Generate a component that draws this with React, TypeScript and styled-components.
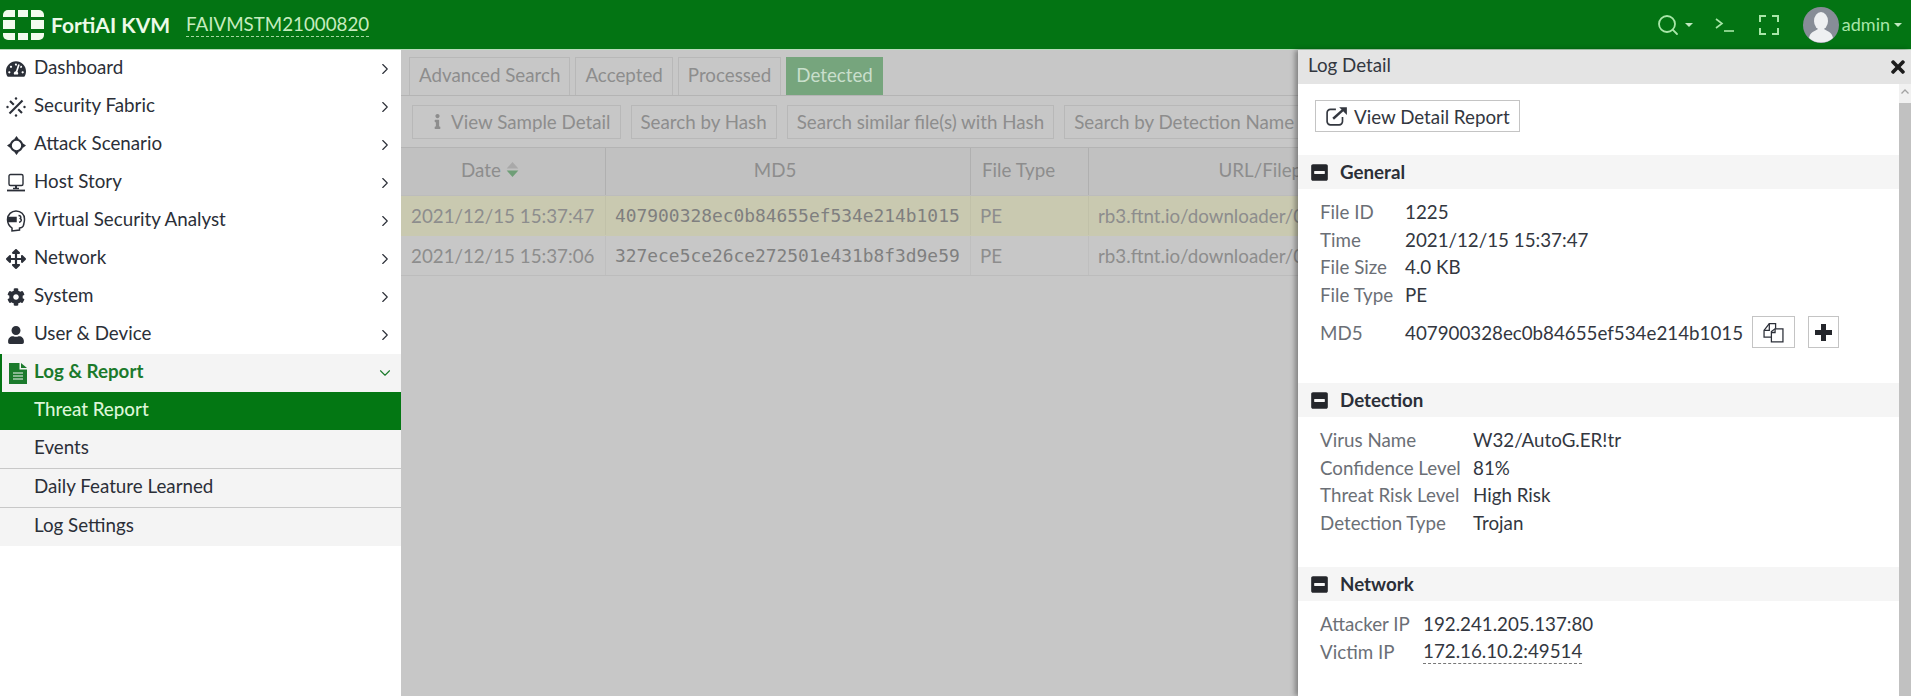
import React from "react";
import styled, { createGlobalStyle } from "styled-components";
import { ChevronDown, ChevronRight, Search } from "lucide-react";
import {
  FaArrowsAlt,
  FaCog,
  FaInfo,
  FaMinusSquare,
  FaTachometerAlt,
  FaTimes,
  FaUser,
} from "react-icons/fa";

const Global = createGlobalStyle`
  html, body {
    margin: 0;
    padding: 0;
    height: 100%;
    overflow: hidden;
    background: #fff;
    font-family: "Lato", "Liberation Sans", sans-serif;
    font-size: 18.75px;
  }
  * { box-sizing: border-box; }
`;

const Page = styled.div`
  width: 1911px;
  height: 696px;
  display: flex;
  flex-direction: column;
  overflow: hidden;
`;

/* top bar */
const TopBar = styled.header`
  height: 50px;
  flex: none;
  display: flex;
  align-items: center;
  background: #037413;
  border-bottom: 1px solid #b9dcbc;
  color: #d9f3d6;
  padding-left: 3px;
`;

const Brand = styled.span`
  font-size: 21px;
  font-weight: 700;
  color: #ecfae8;
  margin-left: 7px;
  width: 135px;
  white-space: nowrap;
`;

const Serial = styled.span`
  font-size: 18.75px;
  line-height: 24px;
  color: #c6ecbf;
  border-bottom: 1px dashed #a3d8a0;
`;

const TopActions = styled.div`
  margin-left: auto;
  display: flex;
  align-items: center;
  color: #a8e6a8;
  padding-right: 9px;
`;

const TopIcon = styled.span<{ $gap: number }>`
  display: inline-flex;
  align-items: center;
  margin-right: ${(p) => p.$gap}px;
`;

const SearchGlyph = styled(Search)`
  margin-right: 1px;
`;

const Caret = styled.span`
  width: 0;
  height: 0;
  margin-left: 4px;
  border-left: 4px solid transparent;
  border-right: 4px solid transparent;
  border-top: 4px solid #c0e8c0;
`;

const AdminName = styled.span`
  font-size: 18px;
  margin-left: 3px;
  padding-bottom: 2px;
  color: #a8e6a8;
`;

const Content = styled.div`
  flex: 1;
  min-height: 0;
  display: flex;
  position: relative;
`;

/* side menu */
const Sidebar = styled.nav`
  width: 401px;
  flex: none;
  background: #fff;
`;

const MenuRow = styled.div<{ $open?: boolean }>`
  height: 38px;
  display: flex;
  align-items: center;
  padding-right: 7px;
  color: ${(p) => (p.$open ? "#1b7a2c" : "#2b2f38")};
  font-weight: ${(p) => (p.$open ? 700 : 400)};
  background: ${(p) => (p.$open ? "#f4f4f4" : "#fff")};
  border-left: ${(p) => (p.$open ? "2px solid #037413" : "0")};
`;

const MenuIcon = styled.span<{ $open?: boolean }>`
  width: ${(p) => (p.$open ? 32 : 34)}px;
  flex: none;
  display: flex;
  justify-content: center;
  padding-left: ${(p) => (p.$open ? 3 : 2)}px;
  padding-right: 4px;
`;

const MenuLabel = styled.span`
  flex: 1;
  white-space: nowrap;
  padding-bottom: 5px;
`;

const SubRow = styled.div<{ $active?: boolean; $line?: boolean }>`
  height: ${(p) => (p.$line ? 39 : 38)}px;
  display: flex;
  align-items: center;
  padding: 0 0 5px 34px;
  background: ${(p) => (p.$active ? "#037713" : "#f4f4f4")};
  color: ${(p) => (p.$active ? "#dcf5d8" : "#2b2f38")};
  font-weight: ${(p) => (p.$active ? 500 : 400)};
  border-bottom: ${(p) => (p.$line ? "1px solid #c8c8c8" : "0")};
`;

/* dimmed main area */
const Main = styled.main`
  flex: 1;
  min-width: 0;
  background: #c7c7c7;
  color: #8d8d8d;
  overflow: hidden;
  padding-top: 7px;
`;

const Tabs = styled.div`
  height: 39px;
  display: flex;
  gap: 5px;
  padding-left: 8px;
  border-bottom: 1px solid #b4b4b4;
`;

const Tab = styled.div<{ $active?: boolean }>`
  height: 38px;
  padding: 0 9px 5px;
  display: flex;
  align-items: center;
  white-space: nowrap;
  border: 1px solid ${(p) => (p.$active ? "#76a57d" : "#b8b8b8")};
  border-bottom: 0;
  background: ${(p) => (p.$active ? "#76a57d" : "transparent")};
  color: ${(p) => (p.$active ? "#c9dfcc" : "#8d8d8d")};
`;

const Toolbar = styled.div`
  height: 52px;
  display: flex;
  gap: 10px;
  padding: 9px 0 0 11px;
  border-bottom: 1px solid #b4b4b4;
`;

const ToolButton = styled.div`
  height: 34px;
  flex: none;
  padding: 0 9px 2px;
  display: flex;
  align-items: center;
  gap: 6px;
  white-space: nowrap;
  border: 1px solid #b8b8b8;
`;

const InfoGlyph = styled(FaInfo)`
  margin-left: 8px;
`;

const TableRow = styled.div<{ $kind?: "head" | "hit" }>`
  display: grid;
  grid-template-columns: 205px 365px 118px 364px;
  height: ${(p) => (p.$kind === "head" ? 48 : 40)}px;
  width: 1052px;
  background: ${(p) =>
    p.$kind === "head" ? "#c1c1c1" : p.$kind === "hit" ? "#c9c9b0" : "#c7c7c7"};
  border-bottom: 1px solid ${(p) => (p.$kind === "hit" ? "#c9c9b0" : "#bcbcbc")};
`;

const Cell = styled.div<{ $head?: boolean; $center?: boolean; $mono?: boolean; $pad?: number; $padRight?: number }>`
  display: flex;
  align-items: center;
  justify-content: ${(p) => (p.$center ? "center" : "flex-start")};
  padding-left: ${(p) => p.$pad ?? 11}px;
  padding-right: ${(p) => p.$padRight ?? 0}px;
  padding-bottom: ${(p) => (p.$head ? 5 : 0)}px;
  white-space: nowrap;
  overflow: hidden;
  border-right: 1px solid ${(p) => (p.$head ? "#b0b0b0" : "rgba(0,0,0,.04)")};
  font-family: ${(p) =>
    p.$mono ? '"DejaVu Sans Mono", "Liberation Mono", monospace' : "inherit"};
  font-size: ${(p) => (p.$mono ? "17.9px" : "18.75px")};
  color: ${(p) => (p.$mono ? "#7f7f7f" : "#8d8d8d")};
`;

const SortIcon = styled.svg`
  margin-left: 5px;
`;

/* log detail drawer */
const Panel = styled.aside`
  position: absolute;
  top: 0;
  right: 0;
  bottom: 0;
  width: 613px;
  background: #fff;
  display: flex;
  flex-direction: column;
  box-shadow: -3px 0 5px rgba(0, 0, 0, 0.35);
  color: #2b2f38;
`;

const PanelHead = styled.div`
  height: 34px;
  flex: none;
  background: #e4e4e4;
  display: flex;
  align-items: center;
  justify-content: space-between;
  padding: 0 3px 0 10px;
  color: #33373f;
`;

const HeadTitle = styled.span`
  padding-bottom: 5px;
`;

const PanelBody = styled.div`
  flex: 1;
  min-height: 0;
  display: flex;
`;

const PanelContent = styled.div`
  flex: 1;
  padding-top: 16px;
`;

const Scrollbar = styled.div`
  width: 12px;
  flex: none;
  background: #c1c1c1;
  display: flex;
  flex-direction: column;
`;

const ScrollArrow = styled.div`
  height: 19px;
  background: #f1f1f1;
  display: flex;
  justify-content: center;
  padding-top: 5px;
`;

const ReportButton = styled.div`
  margin-left: 17px;
  width: 205px;
  height: 32px;
  border: 1px solid #c4c4c4;
  display: flex;
  align-items: center;
  gap: 6px;
  padding-left: 10px;
  white-space: nowrap;
  color: #33373f;
`;

const SectionBand = styled.div<{ $top: number }>`
  margin-top: ${(p) => p.$top}px;
  height: 34px;
  background: #f5f5f5;
  display: flex;
  align-items: center;
  padding-left: 12px;
  gap: 11px;
  font-weight: 700;
  color: #2b2f38;
`;

const SectionName = styled.span`
  padding-bottom: 2px;
`;

const Fields = styled.div<{ $label: number }>`
  display: grid;
  grid-template-columns: ${(p) => p.$label}px 1fr;
  grid-auto-rows: 27.5px;
  padding: 9px 0 0 22px;
  align-items: center;
`;

const FieldName = styled.span`
  color: #6b6f76;
  white-space: nowrap;
`;

const FieldValue = styled.span`
  color: #33373f;
  white-space: nowrap;
`;

const DashedValue = styled(FieldValue)`
  justify-self: start;
  border-bottom: 1px dashed #777;
  line-height: 24px;
`;

const Md5Row = styled.div`
  display: flex;
  align-items: center;
  height: 32px;
  margin: 8px 0 0 22px;
`;

const Md5Name = styled(FieldName)`
  width: 85px;
`;

const IconButton = styled.span<{ $w: number; $left: number }>`
  width: ${(p) => p.$w}px;
  height: 32px;
  margin-left: ${(p) => p.$left}px;
  border: 1px solid #c4c4c4;
  display: inline-flex;
  align-items: center;
  justify-content: center;
  color: #2b2f38;
`;

const Logo = () => (
  <svg width="41" height="30" viewBox="0 0 41 30" fill="#f2fcee">
    <path d="M0 7V5a5 5 0 0 1 5-5h7v7z" />
    <rect x="15" y="0" width="10" height="7" />
    <path d="M28 0h8a5 5 0 0 1 5 5v2H28z" />
    <rect x="0" y="10" width="12" height="9" />
    <rect x="28" y="10" width="13" height="9" />
    <path d="M0 23h12v7H5a5 5 0 0 1-5-5z" />
    <rect x="15" y="23" width="10" height="7" />
    <path d="M28 23h13v2a5 5 0 0 1-5 5h-8z" />
  </svg>
);

const FabricIcon = () => (
  <svg width="20" height="20" viewBox="0 0 20 20" stroke="#2b2f38" fill="#2b2f38" strokeWidth="2.100">
    <path d="M3.500 16.500 16.500 3.500" />
    <path d="M4 4l3.800 3.800M12.200 12.200 16 16" />
    <circle cx="1.500" cy="10" r="1.200" stroke="none" />
    <circle cx="18.500" cy="10" r="1.200" stroke="none" />
    <circle cx="10" cy="1.500" r="1.200" stroke="none" />
    <circle cx="10" cy="18.500" r="1.200" stroke="none" />
  </svg>
);

const TargetIcon = () => (
  <svg width="19" height="19" viewBox="0 0 20 20" fill="#2b2f38">
    <circle cx="10" cy="10" r="6" fill="none" stroke="#2b2f38" strokeWidth="2.200" />
    <path d="M10 0l2.500 3.500h-5zM10 20l-2.500-3.500h5zM0 10l3.500-2.500v5zM20 10l-3.500 2.500v-5z" />
  </svg>
);

const HostIcon = () => (
  <svg width="20" height="20" viewBox="0 0 20 20" fill="none" stroke="#2b2f38">
    <rect x="3" y="1.500" width="14" height="11" rx="1.500" strokeWidth="1.400" />
    <path d="M10 13v3" strokeWidth="2" />
    <path d="M7 15.500h6" strokeWidth="1.500" />
    <path d="M1 17.500h18" strokeWidth="1.800" />
  </svg>
);

const AnalystIcon = () => (
  <svg width="20" height="22" viewBox="0 0 20 22" fill="none" stroke="#2b2f38" strokeWidth="1.500">
    <path d="M6 21v-3C3 16 1.500 13 1.500 9.500 1.500 4.500 5.500 1 10 1c5 0 8.500 3.500 8.500 8 0 1.500 0 2.500-.5 4-.2 2-1 4-2.500 4.500l-2 .5v2z" />
    <path d="M2 7.500h8v4H2.500z" fill="#2b2f38" />
    <path d="M12.500 5.500c2 0 3 1.500 1.800 3 1.700 1 1.200 3.500-1.300 3.800" />
  </svg>
);

const LogIcon = () => (
  <svg width="18" height="21" viewBox="0 0 18 21" fill="#1b7a2c">
    <path d="M0 0h10.500v6.500H18V21H0z" />
    <path d="M12 0l6 5h-6z" />
    <path d="M4 10h10M4 13h10M4 16h10" stroke="#f4f4f4" strokeWidth="1.200" />
  </svg>
);

const TerminalIcon = () => (
  <svg width="20" height="14" viewBox="0 0 20 14" fill="none" stroke="#a8e6a8" strokeWidth="1.600">
    <path d="M1 1l6 4.500-6 4.500" />
    <path d="M9 13h10" />
  </svg>
);

const FullscreenIcon = () => (
  <svg width="20" height="20" viewBox="0 0 20 20" fill="none" stroke="#a8e6a8" strokeWidth="2">
    <path d="M1 7V1h6M13 1h6v6M19 13v6h-6M7 19H1v-6" />
  </svg>
);

const Avatar = () => (
  <svg width="36" height="36" viewBox="0 0 36 36">
    <circle cx="18" cy="18" r="18" fill="#878d97" />
    <ellipse cx="18" cy="14" rx="7" ry="9" fill="#eef0f2" />
    <path d="M6 31c1-6 6-7 9-9h6c3 2 8 3 9 9a18 18 0 0 1-24 0z" fill="#eef0f2" />
  </svg>
);

const ReportIcon = () => (
  <svg width="22" height="20" viewBox="0 0 20 18" fill="none" stroke="#33373f" strokeWidth="1.500">
    <path d="M9 3H4a3 3 0 0 0-3 3v8a3 3 0 0 0 3 3h8a3 3 0 0 0 3-3v-4" />
    <path d="M6.500 11.500 16 3" strokeWidth="2.200" />
    <path d="M12 1h7v7z" fill="#33373f" stroke="none" />
  </svg>
);

const CopyIcon = () => (
  <svg width="21" height="21" viewBox="0 0 20 20" fill="#fff" stroke="#2b2f38" strokeWidth="1.200">
    <path d="M1 8 6 1.500h6v6l-3 2v5H1z" />
    <path d="M8 9l3.500-2.500h7.500v12.500H8z" />
    <path d="M6 1.500V8H1M11.500 6.500V10H8" fill="none" />
  </svg>
);

const PlusIcon = () => (
  <svg width="17" height="17" viewBox="0 0 17 17" fill="none" stroke="#24262b" strokeWidth="5">
    <path d="M8.500 0v17M0 8.500h17" />
  </svg>
);

const menu = [
  { label: "Dashboard", icon: <FaTachometerAlt size={20} /> },
  { label: "Security Fabric", icon: <FabricIcon /> },
  { label: "Attack Scenario", icon: <TargetIcon /> },
  { label: "Host Story", icon: <HostIcon /> },
  { label: "Virtual Security Analyst", icon: <AnalystIcon /> },
  { label: "Network", icon: <FaArrowsAlt size={20} /> },
  { label: "System", icon: <FaCog size={18} /> },
  { label: "User & Device", icon: <FaUser size={18} /> },
];

const rows = [
  { date: "2021/12/15 15:37:47", md5: "407900328ec0b84655ef534e214b1015", hit: true },
  { date: "2021/12/15 15:37:06", md5: "327ece5ce26ce272501e431b8f3d9e59", hit: false },
];

const SectionTitle: React.FC<{ top: number; title: string }> = ({ top, title }) => (
  <SectionBand $top={top}>
    <FaMinusSquare size={19} color="#24262b" />
    <SectionName>{title}</SectionName>
  </SectionBand>
);

const App: React.FC = () => {
  return (
    <Page>
      <Global />
      <TopBar>
        <Logo />
        <Brand>FortiAI KVM</Brand>
        <Serial>FAIVMSTM21000820</Serial>
        <TopActions>
          <TopIcon $gap={22}>
            <SearchGlyph size={24} strokeWidth={1.8} />
            <Caret />
          </TopIcon>
          <TopIcon $gap={24}>
            <TerminalIcon />
          </TopIcon>
          <TopIcon $gap={24}>
            <FullscreenIcon />
          </TopIcon>
          <Avatar />
          <AdminName>admin</AdminName>
          <Caret />
        </TopActions>
      </TopBar>

      <Content>
        <Sidebar>
          {menu.map((item) => (
            <MenuRow key={item.label}>
              <MenuIcon>{item.icon}</MenuIcon>
              <MenuLabel>{item.label}</MenuLabel>
              <ChevronRight size={18} strokeWidth={1.5} />
            </MenuRow>
          ))}
          <MenuRow $open>
            <MenuIcon $open>
              <LogIcon />
            </MenuIcon>
            <MenuLabel>Log &amp; Report</MenuLabel>
            <ChevronDown size={18} strokeWidth={1.5} />
          </MenuRow>
          <SubRow $active>Threat Report</SubRow>
          <SubRow $line>Events</SubRow>
          <SubRow $line>Daily Feature Learned</SubRow>
          <SubRow>Log Settings</SubRow>
        </Sidebar>

        <Main>
          <Tabs>
            <Tab>Advanced Search</Tab>
            <Tab>Accepted</Tab>
            <Tab>Processed</Tab>
            <Tab $active>Detected</Tab>
          </Tabs>
          <Toolbar>
            <ToolButton>
              <InfoGlyph size={15} />
              View Sample Detail
            </ToolButton>
            <ToolButton>Search by Hash</ToolButton>
            <ToolButton>Search similar file(s) with Hash</ToolButton>
            <ToolButton>Search by Detection Name</ToolButton>
          </Toolbar>
          <TableRow $kind="head">
            <Cell $head $center $pad={0} $padRight={26}>
              Date
              <SortIcon width="13" height="17" viewBox="0 0 12 16">
                <path d="M6 1l5.500 6H.5z" fill="#a9a9a9" />
                <path d="M6 15l5.500-6H.5z" fill="#6f9e77" />
              </SortIcon>
            </Cell>
            <Cell $head $center $pad={0} $padRight={26}>MD5</Cell>
            <Cell $head>File Type</Cell>
            <Cell $head $center $pad={6}>URL/Filepath</Cell>
          </TableRow>
          {rows.map((row) => (
            <TableRow key={row.md5} $kind={row.hit ? "hit" : undefined}>
              <Cell $pad={10}>{row.date}</Cell>
              <Cell $mono $pad={9}>{row.md5}</Cell>
              <Cell $pad={9}>PE</Cell>
              <Cell $pad={9}>rb3.ftnt.io/downloader/0</Cell>
            </TableRow>
          ))}
        </Main>

        <Panel>
          <PanelHead>
            <HeadTitle>Log Detail</HeadTitle>
            <FaTimes size={20} color="#1c1c1c" />
          </PanelHead>
          <PanelBody>
            <PanelContent>
              <ReportButton>
                <ReportIcon />
                View Detail Report
              </ReportButton>

              <SectionTitle top={23} title="General" />
              <Fields $label={85}>
                <FieldName>File ID</FieldName>
                <FieldValue>1225</FieldValue>
                <FieldName>Time</FieldName>
                <FieldValue>2021/12/15 15:37:47</FieldValue>
                <FieldName>File Size</FieldName>
                <FieldValue>4.0 KB</FieldValue>
                <FieldName>File Type</FieldName>
                <FieldValue>PE</FieldValue>
              </Fields>
              <Md5Row>
                <Md5Name>MD5</Md5Name>
                <FieldValue>407900328ec0b84655ef534e214b1015</FieldValue>
                <IconButton $w={43} $left={9}>
                  <CopyIcon />
                </IconButton>
                <IconButton $w={31} $left={13}>
                  <PlusIcon />
                </IconButton>
              </Md5Row>

              <SectionTitle top={35} title="Detection" />
              <Fields $label={153}>
                <FieldName>Virus Name</FieldName>
                <FieldValue>W32/AutoG.ER!tr</FieldValue>
                <FieldName>Confidence Level</FieldName>
                <FieldValue>81%</FieldValue>
                <FieldName>Threat Risk Level</FieldName>
                <FieldValue>High Risk</FieldValue>
                <FieldName>Detection Type</FieldName>
                <FieldValue>Trojan</FieldValue>
              </Fields>

              <SectionTitle top={31} title="Network" />
              <Fields $label={103}>
                <FieldName>Attacker IP</FieldName>
                <FieldValue>192.241.205.137:80</FieldValue>
                <FieldName>Victim IP</FieldName>
                <DashedValue>172.16.10.2:49514</DashedValue>
              </Fields>
            </PanelContent>
            <Scrollbar>
              <ScrollArrow>
                <svg width="8" height="5" viewBox="0 0 8 5" fill="none" stroke="#a3a3a3" strokeWidth="1.300">
                  <path d="M.5 4.500 4 1l3.500 3.500" />
                </svg>
              </ScrollArrow>
            </Scrollbar>
          </PanelBody>
        </Panel>
      </Content>
    </Page>
  );
};

export default App;
